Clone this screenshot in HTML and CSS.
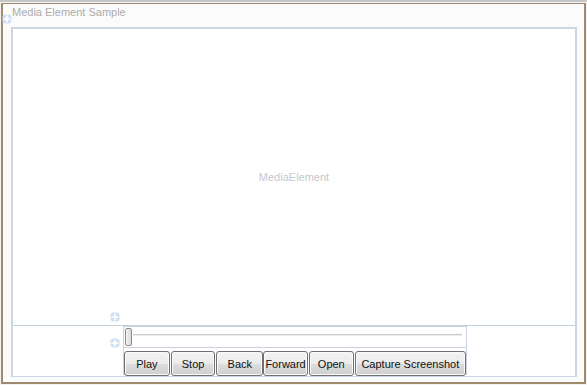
FILE: index.html
```html
<!DOCTYPE html>
<html lang="en">
<head>
    <meta charset="UTF-8">
    <title>Media Element Sample</title>
    <link rel="stylesheet" href="styles.css">
</head>
<body>
    <div class="window">
        <div class="frame">
            <div class="title">Media Element Sample</div>
            <svg class="adorner adorner-title" width="10" height="10" viewBox="0 0 10 10">
                <rect x="0.5" y="0.5" width="9" height="9" rx="3" fill="#cfe0f3"/>
                <path d="M5 1.5v7M1.5 5h7" stroke="#fff" stroke-width="1.6"/>
            </svg>
            <div class="stage">
                <div class="media">MediaElement</div>
                <div class="bottom">
                    <div class="controls">
                        <div class="slider">
                            <div class="thumb"></div>
                            <div class="track"></div>
                        </div>
                        <div class="buttons">
                            <button class="btn btn-play">Play</button>
                            <button class="btn btn-stop">Stop</button>
                            <button class="btn btn-back">Back</button>
                            <button class="btn btn-forward">Forward</button>
                            <button class="btn btn-open">Open</button>
                            <button class="btn btn-capture">Capture Screenshot</button>
                        </div>
                    </div>
                </div>
                <svg class="adorner adorner-row1" width="10" height="10" viewBox="0 0 10 10">
                    <rect x="0.5" y="0.5" width="9" height="9" rx="3" fill="#cfe0f3"/>
                    <path d="M5 1.5v7M1.5 5h7" stroke="#fff" stroke-width="1.6"/>
                </svg>
                <svg class="adorner adorner-row2" width="10" height="10" viewBox="0 0 10 10">
                    <rect x="0.5" y="0.5" width="9" height="9" rx="3" fill="#cfe0f3"/>
                    <path d="M5 1.5v7M1.5 5h7" stroke="#fff" stroke-width="1.6"/>
                </svg>
            </div>
        </div>
    </div>
</body>
</html>
```

FILE: styles.css
```css
/* page */
body {
    margin: 0;
    background: #f3f3f3;
    font-family: 'Liberation Sans', Arial, sans-serif;
}
.window {
    width: 587px;
    height: 385px;
    box-sizing: border-box;
    border-top: 2px solid #c6c6c6;
    padding: 1px 1px 1px 1px;
}
.frame {
    position: relative;
    height: 381px;
    box-sizing: border-box;
    border: 2px solid #a08a6e;
    border-top-width: 1px;
    background: #fbfbfb;
    padding: 0 6px 0 8px;
}
.title {
    height: 23px;
    padding-left: 1px;
    font-size: 11px;
    line-height: 17px;
    color: #ababab;
}
.adorner {
    position: absolute;
    display: block;
}
.adorner-title {
    left: -1px;
    top: 10px;
}

/* designer surface */
.stage {
    position: relative;
    width: 566px;
    height: 350px;
    box-sizing: border-box;
    border: 2px solid #ccd6e1;
    border-bottom-width: 1px;
    background: #fff;
    display: flex;
    flex-direction: column;
}
.media {
    height: 296px;
    border-bottom: 1px solid #c2cfdc;
    display: flex;
    align-items: center;
    justify-content: center;
    font-size: 11px;
    color: #c4c8d0;
}
.bottom {
    flex: 1;
    padding-left: 110px;
}
.adorner-row1 {
    left: 97px;
    top: 283px;
}
.adorner-row2 {
    left: 97px;
    top: 309px;
}

/* slider + buttons */
.controls {
    width: 344px;
    box-sizing: border-box;
    border: 1px solid #c8d3de;
    border-bottom: none;
    height: 49px;
}
.slider {
    height: 20px;
    border-bottom: 1px solid #c8d3de;
    display: flex;
    align-items: center;
    position: relative;
}
.thumb {
    width: 7px;
    height: 18px;
    margin-left: 1px;
    box-sizing: border-box;
    border: 1px solid #8e8e8e;
    border-radius: 2px;
    background: linear-gradient(90deg, #f4f4f4, #d8d8d8);
}
.track {
    position: absolute;
    left: 9px;
    right: 4px;
    top: 7px;
    height: 1px;
    background: #c9c9c9;
    border-bottom: 1px solid #ededed;
}
.buttons {
    display: flex;
    gap: 1px;
    margin-top: 3px;
}
.btn {
    height: 25px;
    box-sizing: border-box;
    padding: 0;
    border: 1px solid #707070;
    border-radius: 3px;
    background: linear-gradient(#f3f3f3 0%, #ebebeb 50%, #dddddd 51%, #cfcfcf 100%);
    box-shadow: inset 0 0 0 1px #fafafa;
    font-family: 'Liberation Sans', Arial, sans-serif;
    font-size: 11px;
    color: #111;
}
.btn-play { width: 46px; }
.btn-stop { width: 45px; }
.btn-back { width: 47px; margin-right: -1px; }
.btn-forward { width: 45px; }
.btn-open { width: 45px; }
.btn-capture { width: 112px; }
```
